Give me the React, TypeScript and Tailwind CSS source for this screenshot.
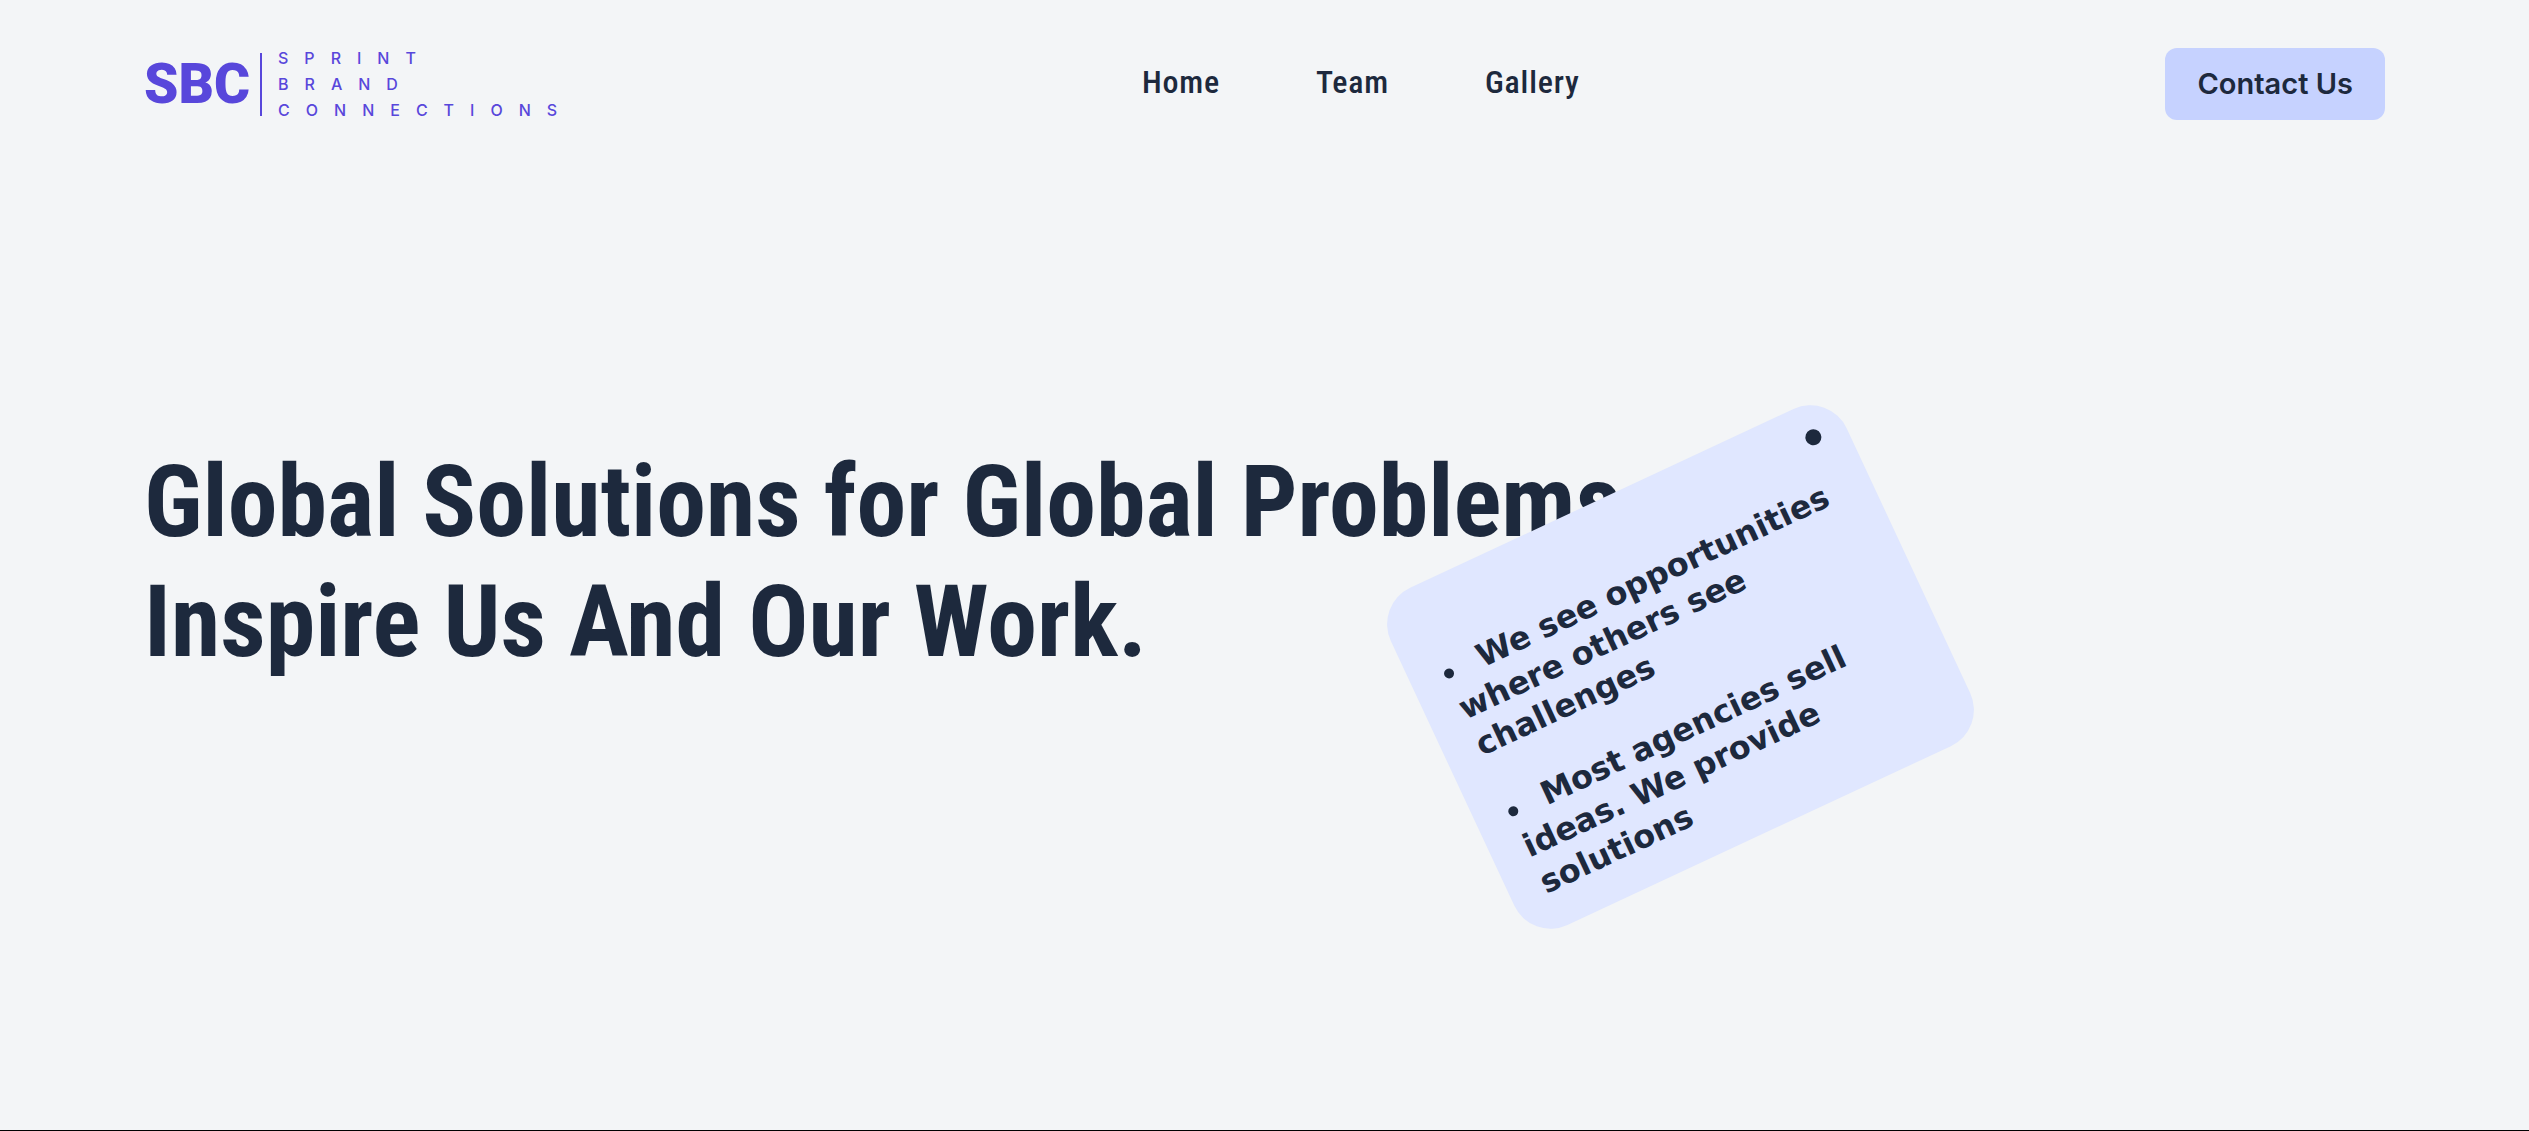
const links = ['Home', 'Team', 'Gallery'];

const notes = [
  'We see opportunities where others see challenges',
  'Most agencies sell ideas. We provide solutions',
];

function Logo() {
  return (
    <a
      href="#"
      aria-label="Sprint Brand Connections"
      className="flex w-[412px] items-center whitespace-nowrap text-[#5847db]"
    >
      <span className="font-['Roboto',sans-serif] text-[55px] leading-none font-black">SBC</span>
      <span className="ml-2.5 h-[63px] w-[2px] shrink-0 bg-[#5847db]" />
      <span className="ml-4 flex flex-col font-['Inter',sans-serif] text-base leading-[26px] font-medium tracking-[16px]">
        <span>SPRINT</span>
        <span>BRAND</span>
        <span>CONNECTIONS</span>
      </span>
    </a>
  );
}

function Header() {
  return (
    <header className="flex h-[168px] items-center justify-between px-36">
      <Logo />
      <nav className="flex gap-24 pb-1 font-['Roboto_Condensed',sans-serif] text-[32px] leading-10 font-medium tracking-wide">
        {links.map((label) => (
          <a key={label} href={`#${label.toLowerCase()}`}>
            {label}
          </a>
        ))}
      </nav>
      <button
        type="button"
        className="h-[72px] rounded-xl bg-indigo-200 px-8 font-['Inter',sans-serif] text-[29px] leading-10 font-semibold"
      >
        Contact Us
      </button>
    </header>
  );
}

function NoteCard() {
  return (
    <aside className="absolute top-[313px] left-[56.5%] w-[503px] -rotate-25 rounded-[40px] bg-indigo-100 pt-[72px] pr-6 pb-7 pl-[34px]">
      <span className="absolute top-[26px] right-[26px] size-4 rounded-full bg-slate-800" />
      <ul className="flex flex-col gap-8 font-['DejaVu_Sans',sans-serif] text-[32px] leading-10 font-bold">
        {notes.map((note) => (
          <li key={note}>
            <span className="mr-7 inline-block size-2.5 rounded-full bg-slate-800 align-middle" />
            {note}
          </li>
        ))}
      </ul>
    </aside>
  );
}

export default function App() {
  return (
    <div className="flex min-h-screen flex-col overflow-hidden border-b border-black bg-[#f3f5f7] text-slate-800">
      <Header />
      <main className="relative grow px-36 pt-[274px]">
        <h1 className="font-['Roboto_Condensed',sans-serif] text-[100px] leading-[120px] font-bold">
          Global Solutions for Global Problems
          <br />
          Inspire Us And Our Work.
        </h1>
        <NoteCard />
      </main>
    </div>
  );
}
